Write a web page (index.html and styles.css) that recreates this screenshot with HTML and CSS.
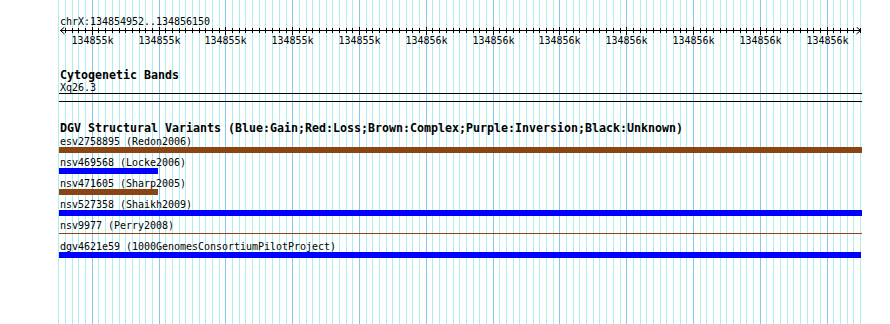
FILE: index.html
```html
<!DOCTYPE html>
<html lang="en">
<head>
<meta charset="utf-8">
<title>GBrowse details</title>
<link rel="stylesheet" href="styles.css">
</head>
<body>
<div class="panel">
  <svg class="grid" id="grid" width="890" height="324" shape-rendering="crispEdges"></svg>
  <div class="content">
    <div class="seg-label">chrX:134854952..134856150</div>
    <svg class="ruler" id="ruler" width="890" height="20"></svg>

    <section class="track cyto">
      <div class="track-title">Cytogenetic Bands</div>
      <div class="feat-label">Xq26.3</div>
      <div class="band"></div>
    </section>

    <section class="track dgv">
      <div class="track-title">DGV Structural Variants (Blue:Gain;Red:Loss;Brown:Complex;Purple:Inversion;Black:Unknown)</div>
      <div class="rows">
        <div class="row">
          <div class="feat-label">esv2758895 (Redon2006)</div>
          <div class="bar brown full"></div>
        </div>
        <div class="row">
          <div class="feat-label">nsv469568 (Locke2006)</div>
          <div class="bar blue short"></div>
        </div>
        <div class="row">
          <div class="feat-label">nsv471605 (Sharp2005)</div>
          <div class="bar brown short"></div>
        </div>
        <div class="row">
          <div class="feat-label">nsv527358 (Shaikh2009)</div>
          <div class="bar blue full"></div>
        </div>
        <div class="row">
          <div class="feat-label">nsv9977 (Perry2008)</div>
          <div class="slot"><div class="thin brown-line"></div></div>
        </div>
        <div class="row">
          <div class="feat-label">dgv4621e59 (1000GenomesConsortiumPilotProject)</div>
          <div class="bar blue last"></div>
        </div>
      </div>
    </section>
  </div>
</div>
<script src="script.js"></script>
</body>
</html>
```

FILE: styles.css
```css
html, body {
  margin: 0;
  padding: 0;
  background: #ffffff;
}

body {
  font-family: "DejaVu Sans Mono", "Liberation Mono", monospace;
  color: #000;
}

.panel {
  position: relative;
  width: 890px;
  height: 324px;
  overflow: hidden;
  background: #ffffff;
}

.grid {
  position: absolute;
  left: 0;
  top: 0;
  display: block;
}

.grid .minor { stroke: #aeeeee; stroke-width: 1; fill: none; }
.grid .major { stroke: #88c8f0; stroke-width: 1; fill: none; }

.content {
  position: relative;
  display: flex;
  flex-direction: column;
  padding-top: 16px;
}

.seg-label {
  font-size: 10px;
  line-height: 11px;
  height: 11px;
  margin-left: 60px;
  letter-spacing: -0.02px;
  white-space: nowrap;
}

.ruler {
  display: block;
}

.ruler .axis { stroke: #000; stroke-width: 1; fill: none; }
.ruler .arrow { stroke: #000; stroke-width: 1; fill: none; }
.ruler .ticks { stroke: #000; stroke-width: 1; fill: none; shape-rendering: crispEdges; }
.ruler .tick-label {
  font-family: "DejaVu Sans Mono", "Liberation Mono", monospace;
  font-size: 10px;
  letter-spacing: -0.02px;
  fill: #000;
}

.track {
  display: flex;
  flex-direction: column;
  padding-left: 59px;
}

.track-title {
  font-weight: bold;
  font-size: 11.63px;
  line-height: 12px;
  height: 12px;
  padding-left: 1px;
  white-space: nowrap;
}

.feat-label {
  font-size: 10px;
  line-height: 11px;
  height: 11px;
  padding-left: 1px;
  letter-spacing: -0.02px;
  white-space: nowrap;
}

.cyto {
  margin-top: 22px;
}

.cyto .feat-label {
  margin-top: 1px;
}

.band {
  width: 803px;
  height: 7px;
  border-top: 1px solid #000;
  border-bottom: 1px solid #000;
}

.dgv {
  margin-top: 20px;
}

.rows {
  display: flex;
  flex-direction: column;
  gap: 4px;
  margin-top: 2px;
}

.row {
  display: flex;
  flex-direction: column;
}

.bar {
  height: 6px;
}

.bar.full { width: 803px; }
.bar.short { width: 99px; }
.bar.last { width: 802px; }

.brown { background: #8b4513; }
.blue { background: #0000ff; }

.slot {
  height: 6px;
  display: flex;
  flex-direction: column;
}

.thin {
  width: 803px;
  height: 1px;
  margin-top: 2px;
}

.brown-line { background: #8b4513; }
```

FILE: script.js
```js
(function () {
  var NS = 'http://www.w3.org/2000/svg';
  var H = 324;
  var START = 134854950; // first 10bp grid position
  function xAt(k) { return Math.round(58.4 + 6.68 * k); }

  var minor = '', major = '', tMinor = '', tMajor = '';
  var labels = [];
  for (var k = 0; k <= 120; k++) {
    var x = xAt(k) + 0.5;
    var isMajor = (k % 10) === 5;
    if (isMajor) {
      major += 'M' + x + ' 0V' + H;
      var bp = START + 10 * k;
      labels.push({ x: xAt(k) + 0.5, t: Math.round(bp / 1000) + 'k' });
    } else {
      minor += 'M' + x + ' 0V' + H;
    }
    if (x > 60 && x < 861) {
      if (isMajor) tMajor += 'M' + x + ' 0V8';
      else tMinor += 'M' + x + ' 1V6';
    }
  }

  function path(cls, d) {
    var p = document.createElementNS(NS, 'path');
    p.setAttribute('class', cls);
    p.setAttribute('d', d);
    return p;
  }

  var grid = document.getElementById('grid');
  grid.appendChild(path('minor', minor));
  grid.appendChild(path('major', major));

  var ruler = document.getElementById('ruler');
  ruler.appendChild(path('axis', 'M60 3.5H861'));
  ruler.appendChild(path('arrow', 'M64.5 0L60.5 3.5L64.5 7'));
  ruler.appendChild(path('arrow', 'M856.5 0L860.5 3.5L856.5 7'));
  ruler.appendChild(path('ticks', tMinor + tMajor));
  labels.forEach(function (l) {
    var t = document.createElementNS(NS, 'text');
    t.setAttribute('class', 'tick-label');
    t.setAttribute('x', l.x);
    t.setAttribute('y', 17);
    t.setAttribute('text-anchor', 'middle');
    t.textContent = l.t;
    ruler.appendChild(t);
  });
})();
```
